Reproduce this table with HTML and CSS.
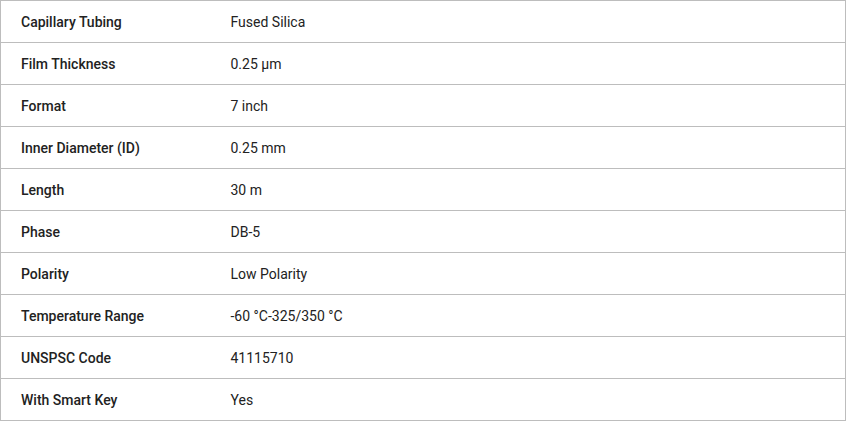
FILE: index.html
```html
<!DOCTYPE html>
<html lang="en">
<head>
  <meta charset="UTF-8" />
  <title>Specifications</title>
  <link rel="stylesheet" href="styles.css">
</head>
<body>
  <table class="spec-table">
    <tr><th>Capillary Tubing</th><td>Fused Silica</td></tr>
    <tr><th>Film Thickness</th><td>0.25 µm</td></tr>
    <tr><th>Format</th><td>7 inch</td></tr>
    <tr><th>Inner Diameter (ID)</th><td>0.25 mm</td></tr>
    <tr><th>Length</th><td>30 m</td></tr>
    <tr><th>Phase</th><td>DB-5</td></tr>
    <tr><th>Polarity</th><td>Low Polarity</td></tr>
    <tr><th>Temperature Range</th><td>-60 °C-325/350 °C</td></tr>
    <tr><th>UNSPSC Code</th><td>41115710</td></tr>
    <tr><th>With Smart Key</th><td>Yes</td></tr>
  </table>
</body>
</html>
```
FILE: styles.css
```css
body {
  margin: 0;
  padding: 0;
  background: #fff;
  font-family: Roboto, "Liberation Sans", sans-serif;
}
.spec-table {
  width: 846px;
  border-collapse: collapse;
  border: 1px solid #bdbdbd;
  font-size: 14px;
  color: #222;
}
.spec-table tr {
  border-bottom: 1px solid #bdbdbd;
}
.spec-table th,
.spec-table td {
  height: 42px;
  padding: 0 20px;
  text-align: left;
  vertical-align: middle;
  box-sizing: border-box;
}
.spec-table th {
  width: 210px;
  font-weight: 500;
}
.spec-table td {
  font-weight: 400;
}
```
